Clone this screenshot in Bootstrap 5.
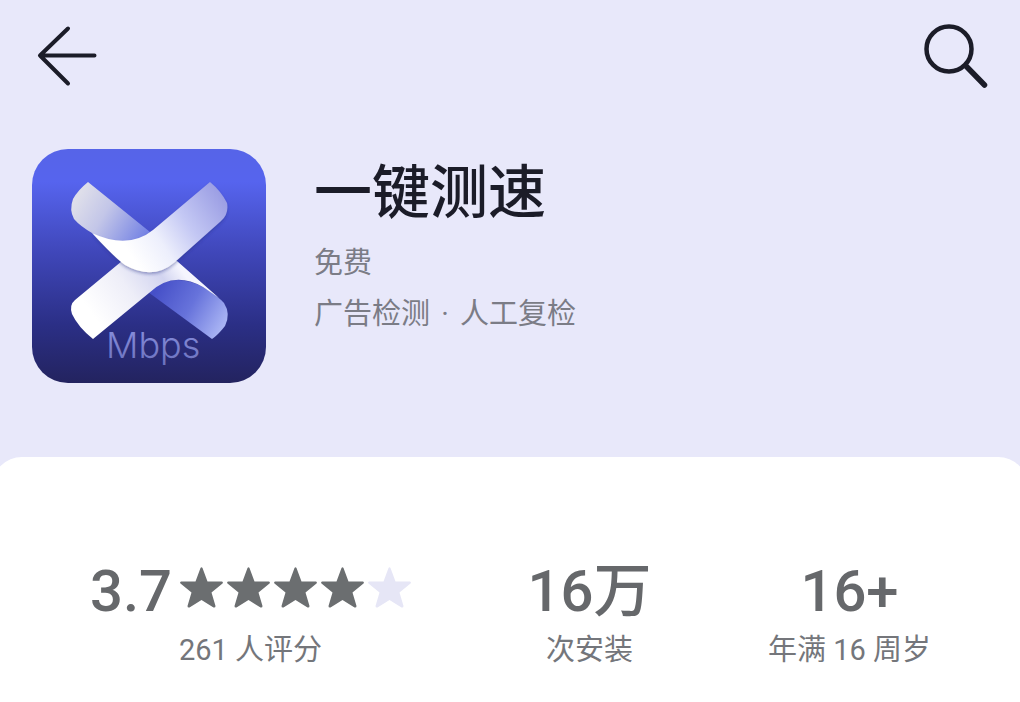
<!DOCTYPE html>
<html lang="zh-CN">
<head>
<meta charset="utf-8">
<meta name="viewport" content="width=device-width, initial-scale=1">
<title>一键测速</title>
<link href="https://cdn.jsdelivr.net/npm/bootstrap@5.3.0/dist/css/bootstrap.min.css" rel="stylesheet">
<style>
  body { background: #e8e8fa; color: #1b1c28; font-family: Roboto, "Noto Sans CJK SC", sans-serif; overflow-x: hidden; }
  .top-bar { padding: 16px 24px 0 28px; }
  .icon-btn { width: 80px; height: 80px; }
  .app-head { padding: 53px 32px 0; gap: 48px; }
  .app-icon { width: 234px; height: 234px; flex: none; }
  .app-name { font-size: 58px; line-height: 64px; font-weight: 500; margin: 12px 0 20px; }
  .meta-line { font-size: 29px; line-height: 36px; color: #7b7c86; margin-bottom: 15px; }
  .sheet { background: #fff; margin: 74px -8px 0; border-radius: 30px 30px 0 0; padding: 100px 97px 32px 98px; }
  .stat-value { font-size: 58px; line-height: 68px; font-weight: 500; color: #66686b; }
  .stat-label { font-size: 29px; line-height: 36px; color: #74767b; margin-top: 7px; }
  .stars { gap: 4px; margin-left: 8px; padding-bottom: 8px; }
  .star { width: 43px; height: 41px; fill: #6b6e70; }
  .star-off { fill: #e6e6f6; }
</style>
</head>
<body class="min-vh-100 d-flex flex-column">
<header class="top-bar d-flex justify-content-between">
  <button type="button" class="btn border-0 p-0 icon-btn" aria-label="返回">
    <svg width="80" height="80" viewBox="0 0 80 80" fill="none" stroke="#1b1c28" stroke-width="4" stroke-linecap="round" stroke-linejoin="round"><path d="M40 12.500 12 39.500 40 67.500M12 39.500H66.500"/></svg>
  </button>
  <button type="button" class="btn border-0 p-0 icon-btn" aria-label="搜索">
    <svg width="80" height="80" viewBox="0 0 80 80" fill="none" stroke="#1b1c28" stroke-linecap="round"><circle cx="33" cy="33" r="22.500" stroke-width="4.500"/><path d="M50 50 68.500 69" stroke-width="5.500"/></svg>
  </button>
</header>
<main class="flex-grow-1 d-flex flex-column">
  <section class="app-head d-flex">
    <svg class="app-icon" viewBox="0 0 234 234" role="img" aria-label="Mbps">
      <defs>
        <linearGradient id="bg" x1="0" y1="0" x2="0" y2="1"><stop offset="0" stop-color="#5664e8"/><stop offset=".14" stop-color="#5664ee"/><stop offset=".45" stop-color="#3f46b8"/><stop offset=".75" stop-color="#2b2f86"/><stop offset="1" stop-color="#23235f"/></linearGradient>
        <linearGradient id="tl" gradientUnits="userSpaceOnUse" x1="45" y1="50" x2="112" y2="90"><stop offset="0" stop-color="#dedeea"/><stop offset=".4" stop-color="#c3c6e8"/><stop offset="1" stop-color="#7482e4"/></linearGradient>
        <linearGradient id="tr" gradientUnits="userSpaceOnUse" x1="100" y1="108" x2="190" y2="48"><stop offset="0" stop-color="#fff"/><stop offset=".3" stop-color="#edeffc"/><stop offset=".6" stop-color="#c4c8f4"/><stop offset="1" stop-color="#9c9fe4"/></linearGradient>
        <linearGradient id="bl" gradientUnits="userSpaceOnUse" x1="60" y1="165" x2="140" y2="108"><stop offset="0" stop-color="#fff"/><stop offset=".45" stop-color="#eeeef8"/><stop offset=".8" stop-color="#d2d4f0"/><stop offset="1" stop-color="#f5f5fe"/></linearGradient>
        <linearGradient id="br" gradientUnits="userSpaceOnUse" x1="126" y1="138" x2="192" y2="176"><stop offset="0" stop-color="#4650c8"/><stop offset=".5" stop-color="#6773db"/><stop offset="1" stop-color="#a9b4f4"/></linearGradient>
        <linearGradient id="word" x1="0" y1="0" x2="0" y2="1"><stop offset="0" stop-color="#8b92e0"/><stop offset="1" stop-color="#6a70bc"/></linearGradient>
        <filter id="shade" x="-10%" y="-10%" width="120%" height="130%"><feDropShadow dx="0" dy="2" stdDeviation="1.500" flood-color="#2b2f86" flood-opacity=".4"/></filter>
      </defs>
      <rect width="234" height="234" rx="36" fill="url(#bg)"/>
      <path d="M116 143 180 190Q186 186 193 177Q199 165 192 154Q187 148 171 138Q140 122 116 143Z" fill="url(#br)"/>
      <path d="M90 112 43 151Q37 156 40 165Q46 178 61 190L117 144Q141 121 171 138L187 149 145 112Z" fill="url(#bl)"/>
      <path d="M56 33Q46 41 41 50Q37 61 42 70Q48 77 60 84Q92 104 118 83Z" fill="url(#tl)"/>
      <path d="M60 84Q96 101 121 81L178 33Q189 42 195 54Q197 65 189 72L143 113Q121 132 93 116Q83 109 60 84Z" fill="url(#tr)" filter="url(#shade)"/>
      <text x="74" y="209" font-family="Inter, sans-serif" font-weight="300" font-size="36" fill="url(#word)">Mbps</text>
    </svg>
    <div>
      <h1 class="app-name">一键测速</h1>
      <p class="meta-line">免费</p>
      <p class="meta-line">广告检测 <span class="mx-1">·</span> 人工复检</p>
    </div>
  </section>
  <section class="sheet flex-grow-1 d-flex justify-content-between text-center">
    <div>
      <div class="stat-value d-flex align-items-center">3.7
        <span class="stars d-flex" role="img" aria-label="3.7">
          <svg class="star" viewBox="0 0 43 41"><use href="#star"/></svg>
          <svg class="star" viewBox="0 0 43 41"><use href="#star"/></svg>
          <svg class="star" viewBox="0 0 43 41"><use href="#star"/></svg>
          <svg class="star" viewBox="0 0 43 41"><use href="#star"/></svg>
          <svg class="star star-off" viewBox="0 0 43 41"><use href="#star"/></svg>
        </span>
      </div>
      <div class="stat-label">261 人评分</div>
    </div>
    <div>
      <div class="stat-value">16万</div>
      <div class="stat-label">次安装</div>
    </div>
    <div>
      <div class="stat-value">16+</div>
      <div class="stat-label">年满 16 周岁</div>
    </div>
  </section>
</main>
<svg class="d-none"><symbol id="star" viewBox="0 0 43 41"><path d="M20.500 1Q21.500-.5 22.500 1L27.500 14.500 42 14.500Q43.500 15 42.500 16.500L31.500 25.500 35.500 39Q35.500 41 33.500 40.500L21.500 33 9.500 40.500Q7.500 41 7.500 39L11.500 25.500.5 16.500Q-.5 15 1 14.500L15.500 14.500Z"/></symbol></svg>
<script src="https://cdn.jsdelivr.net/npm/bootstrap@5.3.0/dist/js/bootstrap.bundle.min.js"></script>
</body>
</html>
